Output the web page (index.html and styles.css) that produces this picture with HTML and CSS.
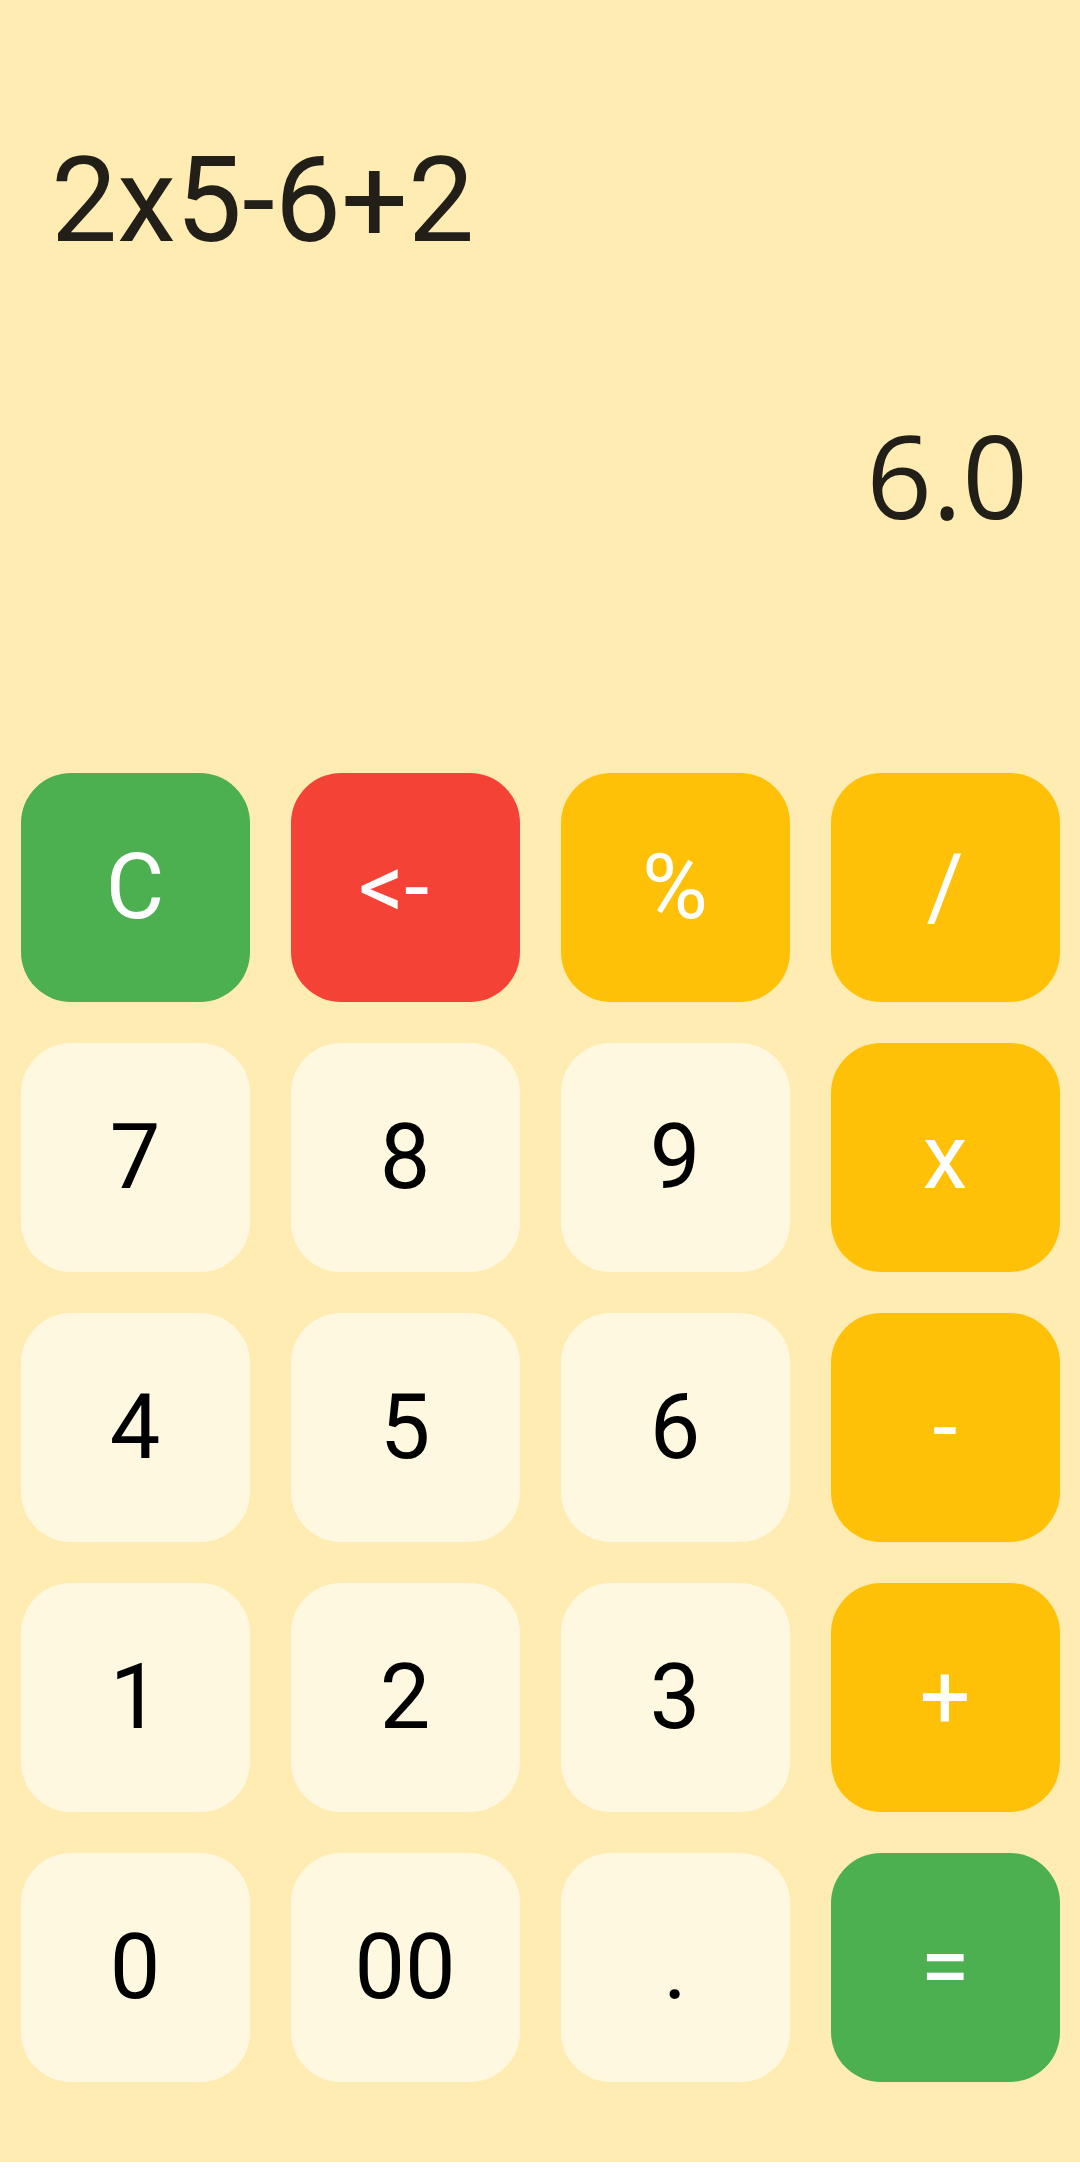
FILE: index.html
```html
<!DOCTYPE html>
<html lang="en">
<head>
<meta charset="utf-8">
<title>Calculator</title>
<link rel="stylesheet" href="styles.css">
</head>
<body>
<main class="app">
  <section class="display">
    <div class="expr">2x5-6+2</div>
    <div class="result">6.0</div>
  </section>
  <section class="keypad">
    <div class="key key-green">C</div>
    <div class="key key-red">&lt;-&nbsp;</div>
    <div class="key key-amber">%</div>
    <div class="key key-amber">/</div>

    <div class="key key-light">7</div>
    <div class="key key-light">8</div>
    <div class="key key-light">9</div>
    <div class="key key-amber">x</div>

    <div class="key key-light">4</div>
    <div class="key key-light">5</div>
    <div class="key key-light">6</div>
    <div class="key key-amber">-</div>

    <div class="key key-light">1</div>
    <div class="key key-light">2</div>
    <div class="key key-light">3</div>
    <div class="key key-amber">+</div>

    <div class="key key-light">0</div>
    <div class="key key-light">00</div>
    <div class="key key-light">.</div>
    <div class="key key-green">=</div>
  </section>
</main>
</body>
</html>
```
FILE: styles.css
```css
html, body {
  margin: 0;
  padding: 0;
  background: #ffffff;
}

.app {
  height: 2162px;
  background: #FFECB3;
  display: flex;
  flex-direction: column;
  font-family: Roboto, "Liberation Sans", sans-serif;
}

.display {
  padding: 141px 52px 0 51px;
}

.expr {
  font-family: Roboto, "Liberation Sans", sans-serif;
  font-size: 118px;
  line-height: 120px;
  height: 120px;
  color: #211f17;
  white-space: nowrap;
}

.result {
  margin-top: 154px;
  font-family: "Open Sans", "Noto Sans", sans-serif;
  font-size: 115px;
  line-height: 120px;
  height: 120px;
  color: #211f17;
  text-align: right;
}

.keypad {
  margin-top: 238px;
  padding: 0 20.5px;
  display: grid;
  grid-template-columns: repeat(4, 1fr);
  grid-auto-rows: 229px;
  column-gap: 41px;
  row-gap: 41px;
}

.key {
  display: flex;
  align-items: center;
  justify-content: center;
  border-radius: 50px;
  font-family: Roboto, "Liberation Sans", sans-serif;
  font-size: 90px;
  line-height: 1;
  white-space: pre;
}

.key-light {
  background: #FFF8E1;
  color: #000000;
}

.key-green {
  background: #4CAF50;
  color: #ffffff;
}

.key-red {
  background: #F44336;
  color: #ffffff;
}

.key-amber {
  background: #FFC107;
  color: #ffffff;
}
```
